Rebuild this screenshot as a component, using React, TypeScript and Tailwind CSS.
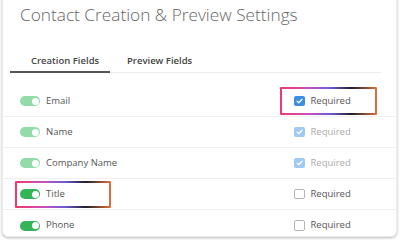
import React from "react";

const grad =
  "bg-[linear-gradient(90deg,#f2386c_0%,#c94fbf_30%,#6d5bd3_52%,#1f1f2a_74%,#e4703a_100%)]";

function Toggle({ on }: { on: boolean }) {
  return (
    <div
      className={`shrink-0 w-[20px] h-[10px] rounded-full flex items-center justify-end pr-[1.5px] ${
        on ? "bg-[#35b457]" : "bg-[#92dcaa]"
      }`}
    >
      <div className="w-[7px] h-[7px] rounded-full bg-white" />
    </div>
  );
}

function Check({ state }: { state: "on" | "faded" | "off" }) {
  if (state === "off")
    return <div className="shrink-0 w-[10.5px] h-[10.5px] rounded-[2px] border border-[#b5b5b5] bg-white" />;
  return (
    <div
      className={`shrink-0 w-[10.5px] h-[10.5px] rounded-[2px] flex items-center justify-center ${
        state === "on" ? "bg-[#3b8ee3]" : "bg-[#9fcaf3]"
      }`}
    >
      <svg width="7" height="6" viewBox="0 0 7 6">
        <path d="M1 3.1 L2.8 4.8 L6 1.3" stroke="white" strokeWidth="1.3" fill="none" strokeLinecap="round" strokeLinejoin="round" />
      </svg>
    </div>
  );
}

type Row = {
  label: string;
  on: boolean;
  check: "on" | "faded" | "off";
  hlLeft?: boolean;
  hlRight?: boolean;
};

const rows: Row[] = [
  { label: "Email", on: false, check: "on", hlRight: true },
  { label: "Name", on: false, check: "faded" },
  { label: "Company Name", on: false, check: "faded" },
  { label: "Title", on: true, check: "off", hlLeft: true },
  { label: "Phone", on: true, check: "off" },
];

export default function App() {
  return (
    <div
      className="w-[400px] h-[243px] bg-white overflow-hidden"
      style={{ fontFamily: "'Open Sans', sans-serif" }}
    >
      <div className="ml-[2px] w-[395px] h-[243px] -mt-[6px] rounded-md bg-white border border-[#ececec] shadow-[0_1px_3px_rgba(0,0,0,0.28)] flex flex-col overflow-hidden">
        <div className="pt-[7px] pl-[17px] text-[17.25px] leading-[26px] font-light text-[#666] whitespace-nowrap">
          Contact Creation &amp; Preview Settings
        </div>
        <div className="mt-[26px] ml-[7px] mr-[15px] flex border-b border-[#ececec]">
          <div className="w-[100px] pl-[21px] pb-[3px] text-[9.5px] leading-[14px] font-semibold text-[#444] border-b-2 border-[#555] -mb-px">
            Creation Fields
          </div>
          <div className="pl-[17px] pb-[3px] text-[9.5px] leading-[14px] font-semibold text-[#444]">
            Preview Fields
          </div>
        </div>
        <div className="mt-[13px] flex flex-col">
          {rows.map((r) => (
            <div
              key={r.label}
              className="h-[31px] border-b border-[#f0f0f0] last:border-b-0 flex items-center justify-between pl-[12px] pr-[19px]"
            >
              <div className={`w-[96px] h-[27px] p-[2px] rounded-[1px] ${r.hlLeft ? grad : ""}`}>
                <div className="w-full h-full bg-white flex items-center gap-[6px] pl-[3px]">
                  <Toggle on={r.on} />
                  <span className="text-[9.5px] text-[#555] whitespace-nowrap">{r.label}</span>
                </div>
              </div>
              <div className={`w-[97px] h-[28px] p-[2px] rounded-[1px] ${r.hlRight ? grad : ""}`}>
                <div className="w-full h-full bg-white flex items-center gap-[6px] pl-[12px]">
                  <Check state={r.check} />
                  <span
                    className={`text-[9.5px] ${r.check === "faded" ? "text-[#aaa]" : "text-[#555]"}`}
                  >
                    Required
                  </span>
                </div>
              </div>
            </div>
          ))}
        </div>
      </div>
    </div>
  );
}
